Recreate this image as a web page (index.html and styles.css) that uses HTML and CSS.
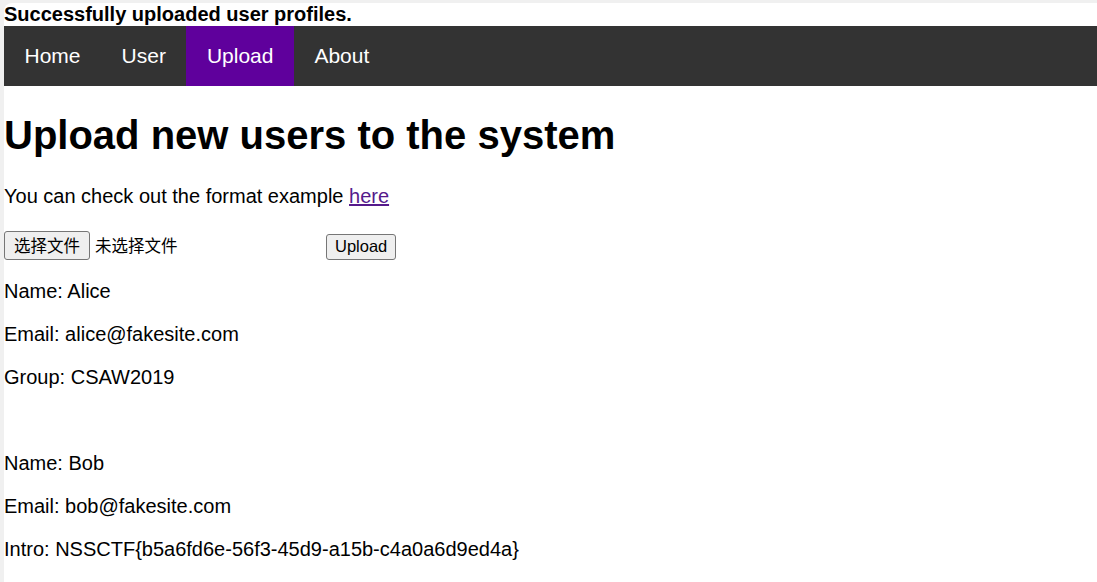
FILE: index.html
```html
<!DOCTYPE html>
<html lang="en">
<head>
    <meta charset="UTF-8">
    <title>Upload</title>
    <link rel="stylesheet" href="styles.css">
</head>
<body>
    <b class="status">Successfully uploaded user profiles.</b>

    <!-- Menu -->
    <ul class="nav">
        <li><a href="#">Home</a></li>
        <li><a href="#">User</a></li>
        <li><a class="active" href="#">Upload</a></li>
        <li><a href="#">About</a></li>
    </ul>

    <h1>Upload new users to the system</h1>
    <p>You can check out the format example <a class="link" href="#">here</a></p>

    <form class="upload-form">
        <span class="file-picker"><button type="button" class="btn btn-file">选择文件</button> <span class="file-name">未选择文件</span></span>
        <input type="submit" class="btn" value="Upload">
    </form>

    <p>Name: Alice</p>
    <p>Email: alice@fakesite.com</p>
    <p>Group: CSAW2019</p>
    <br>
    <p>Name: Bob</p>
    <p>Email: bob@fakesite.com</p>
    <p>Intro: NSSCTF{b5a6fd6e-56f3-45d9-a15b-c4a0a6d9ed4a}</p>
</body>
</html>
```

FILE: styles.css
```css
html {
    background-color: #f0f0f0;
}
body {
    margin: 3px 0 0 4px;
    min-height: 600px;
    background-color: #fff;
    border-top-left-radius: 8px;
    font-family: "Liberation Sans", Arial, sans-serif;
    font-size: 20px;
    color: #000;
}
.status {
    display: block;
    line-height: 23px;
}
.nav {
    list-style-type: none;
    margin: 0;
    padding: 0;
    overflow: hidden;
    background-color: #333;
}
.nav li {
    float: left;
}
.nav li a {
    display: block;
    color: #fff;
    text-align: center;
    padding: 0 20.5px;
    font-size: 21px;
    line-height: 60px;
    text-decoration: none;
}
.nav li a.active {
    background-color: #5f009c;
}
h1 {
    font-size: 40px;
    margin: 26.8px 0;
}
p {
    margin: 20px 0;
}
.link {
    color: #551a8b;
}
.upload-form {
    display: flex;
    align-items: flex-end;
    height: 32px;
}
.file-picker {
    display: inline-flex;
    align-items: center;
    width: 316px;
    margin-right: 6px;
    font-family: "Noto Sans CJK SC", sans-serif;
    font-size: 16.5px;
}
.file-name {
    margin-left: 5px;
}
.btn {
    height: 26px;
    padding: 0 8px;
    font-family: "Liberation Sans", Arial, sans-serif;
    font-size: 16.5px;
    color: #000;
    background-color: #efefef;
    border: 1px solid #767676;
    border-radius: 3px;
}
.btn-file {
    height: 29px;
    padding: 0 9px;
    font-family: "Noto Sans CJK SC", sans-serif;
}
```
